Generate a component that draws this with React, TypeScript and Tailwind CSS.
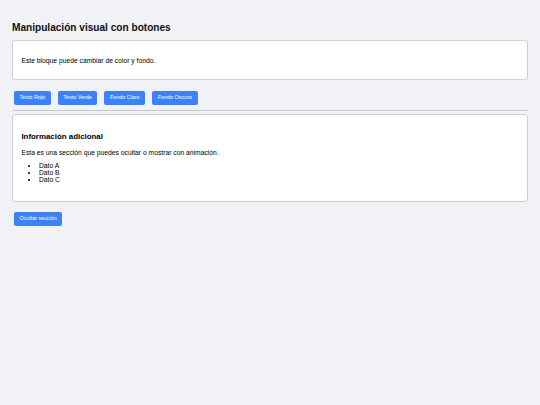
import { useState } from "react";

type TextTone = "default" | "red" | "green";
type BgTone = "white" | "light" | "dark";

const textClass: Record<TextTone, string> = {
  default: "text-black",
  red: "text-red-600",
  green: "text-green-600",
};

const bgClass: Record<BgTone, string> = {
  white: "bg-white",
  light: "bg-[#e0f2fe]",
  dark: "bg-[#333333]",
};

function ActionButton({ label, onClick }: { label: string; onClick: () => void }) {
  return (
    <button
      type="button"
      onClick={onClick}
      className="h-[13.4px] rounded-[2px] bg-[#3b82f6] px-[5.6px] text-[5.4px] leading-none text-white"
    >
      {label}
    </button>
  );
}

export default function App() {
  const [tone, setTone] = useState<TextTone>("default");
  const [bg, setBg] = useState<BgTone>("white");
  const [open, setOpen] = useState(true);

  return (
    <div className="min-h-screen bg-[#f0f2f5] px-[12px] pt-[12px] font-['Liberation_Sans',Arial,sans-serif] text-[6.75px] leading-[normal] text-black">
      <h2 className="mt-[9.6px] mb-[7.5px] text-[10.1px] font-bold text-[#111]">
        Manipulación visual con botones
      </h2>

      <div className={`rounded-[3px] border border-[#cfcfcf] px-[8.4px] py-[8.9px] ${bgClass[bg]}`}>
        <p className={`my-[6.75px] ${textClass[tone]}`}>Este bloque puede cambiar de color y fondo.</p>
      </div>

      <div className="mt-[10.8px] flex gap-[7px] pl-[2px]">
        <ActionButton label="Texto Rojo" onClick={() => setTone("red")} />
        <ActionButton label="Texto Verde" onClick={() => setTone("green")} />
        <ActionButton label="Fondo Claro" onClick={() => setBg("light")} />
        <ActionButton label="Fondo Oscuro" onClick={() => setBg("dark")} />
      </div>

      <hr className="mt-[5.5px] border-t border-[#c4c7cc]" />

      {open ? (
        <div className="mt-[2.8px] rounded-[3px] border border-[#cfcfcf] bg-white px-[8.4px] pt-[9px] pb-[10.8px]">
          <h3 className="mt-[7.9px] mb-[7.9px] text-[7.9px] font-bold">Información adicional</h3>
          <p className="mb-[6.75px]">Esta es una sección que puedes ocultar o mostrar con animación.</p>
          <ul className="my-[6.75px] list-disc pl-[17.5px]">
            <li>Dato A</li>
            <li>Dato B</li>
            <li>Dato C</li>
          </ul>
        </div>
      ) : null}

      <div className="mt-[10.3px] pl-[2px]">
        <ActionButton label={open ? "Ocultar sección" : "Mostrar sección"} onClick={() => setOpen(!open)} />
      </div>
    </div>
  );
}
